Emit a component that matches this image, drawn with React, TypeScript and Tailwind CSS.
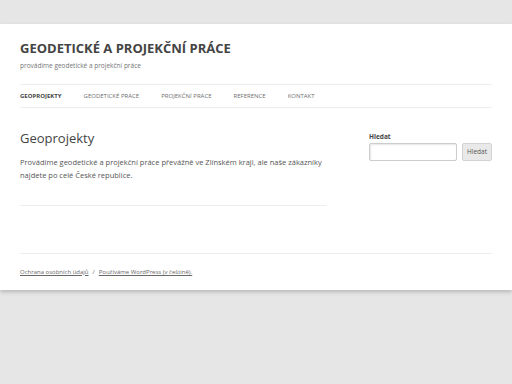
export default function App() {
  const nav = ["Geodetické práce", "Projekční práce", "Reference", "Kontakt"];
  return (
    <div className="min-h-[384px] bg-[#e6e6e6] pt-[24px] font-['Open_Sans',sans-serif]">
      <div className="bg-white px-[20px] shadow-[0_2px_4px_rgba(100,100,100,0.35)]">
        {/* Header */}
        <header className="pt-[14px]">
          <h1 className="text-[13px] font-bold leading-[20px] text-[#444]">
            GEODETICKÉ A PROJEKČNÍ PRÁCE
          </h1>
          <p className="mt-[2px] text-[6.5px] leading-[12px] text-[#757575]">
            provádíme geodetické a projekční práce
          </p>
        </header>

        {/* Navigation */}
        <nav className="mt-[12px] flex h-[24px] items-center gap-[22px] border-y border-[#ededed] text-[6px] uppercase text-[#707070]">
          <span className="font-bold text-[#444]">Geoprojekty</span>
          {nav.map((n) => (
            <span key={n}>{n}</span>
          ))}
        </nav>

        {/* Main */}
        <div className="flex pt-[20px]">
          <main className="w-[307px]">
            <h2 className="text-[13px] leading-[20px] text-[#444]">Geoprojekty</h2>
            <p className="mt-[8px] text-[7.5px] leading-[13px] text-[#555]">
              Provádíme geodetické a projekční práce převážně ve Zlínském kraji, ale naše zákazníky najdete po celé České republice.
            </p>
            <div className="mt-[23px] border-b border-[#ededed]" />
          </main>
          <aside className="ml-auto w-[123px] pt-[4px]">
            <div className="text-[6.5px] font-bold leading-[10px] text-[#444]">Hledat</div>
            <div className="mt-[1px] flex gap-[5px]">
              <div className="h-[18px] w-[88px] rounded-[2px] border border-[#ccc] shadow-[inset_1px_1px_2px_rgba(0,0,0,0.1)]" />
              <div className="flex h-[18px] w-[30px] items-center justify-center rounded-[2px] border border-[#d2d2d2] bg-[#e9e9e9] text-[6.5px] text-[#555]">
                Hledat
              </div>
            </div>
          </aside>
        </div>

        {/* Footer */}
        <footer className="mt-[47px] flex h-[37px] items-center gap-[4px] border-t border-[#ededed] text-[6px] text-[#686868]">
          <span className="underline">Ochrana osobních údajů</span>
          <span>/</span>
          <span className="underline">Používáme WordPress (v češtině).</span>
        </footer>
      </div>
    </div>
  );
}
